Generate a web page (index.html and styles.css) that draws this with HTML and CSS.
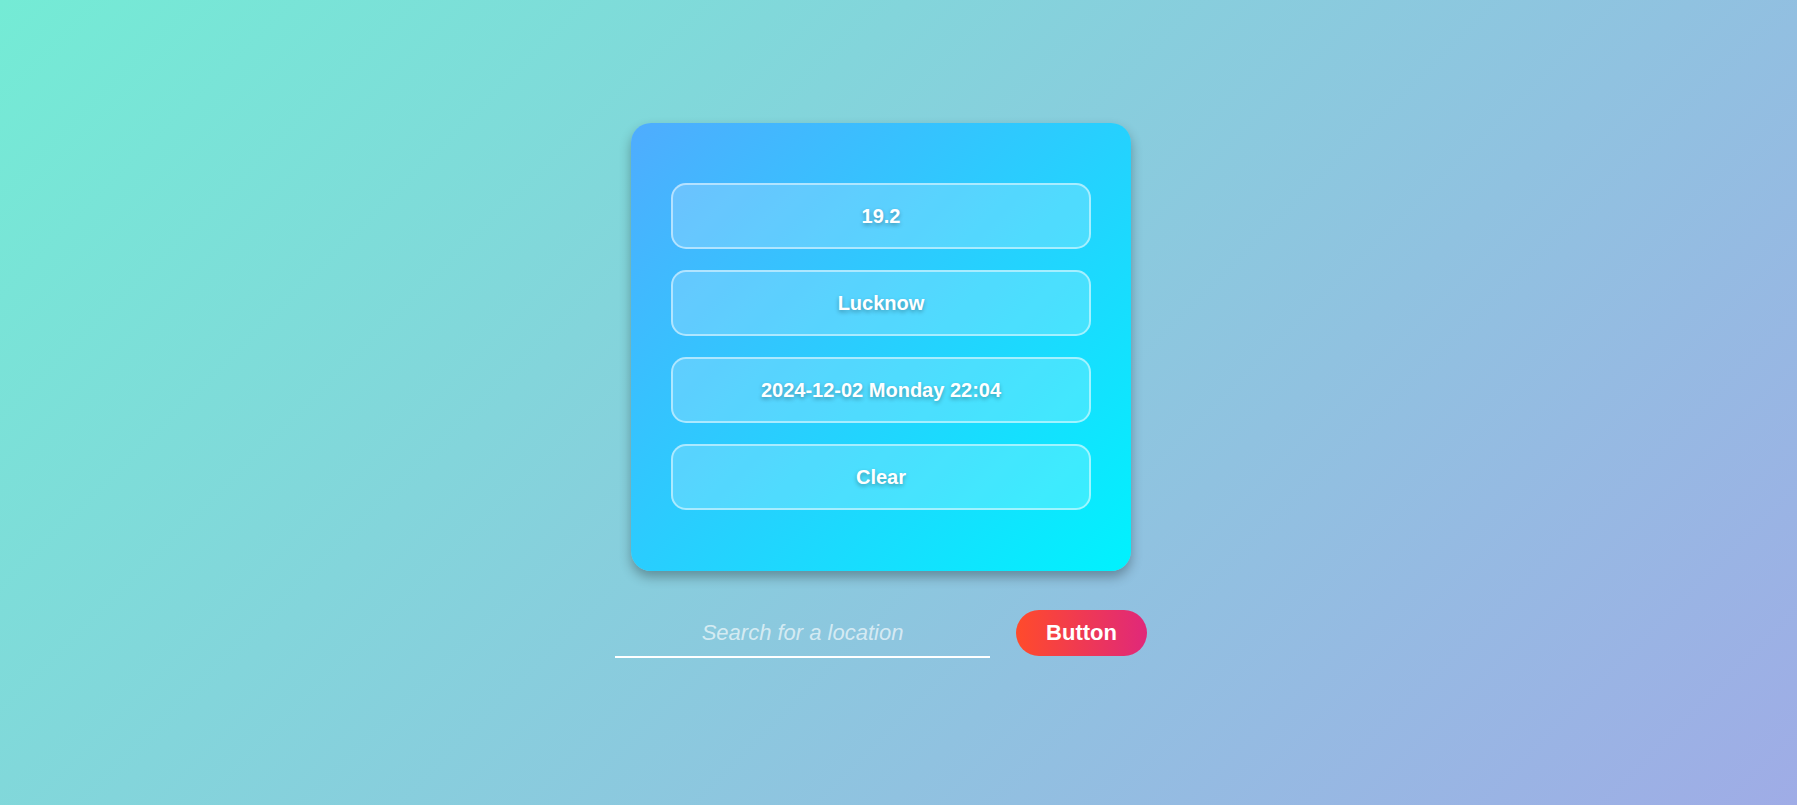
FILE: index.html
```html
<!DOCTYPE html>
<html lang="en">
<head>
<meta charset="utf-8">
<title>Weather</title>
<link rel="stylesheet" href="styles.css">
</head>
<body>
<main class="page">
  <section class="card">
    <div class="item">19.2</div>
    <div class="item">Lucknow</div>
    <div class="item">2024-12-02 Monday 22:04</div>
    <div class="item">Clear</div>
  </section>
  <div class="search">
    <input class="search-input" type="text" placeholder="Search for a location">
    <button class="search-btn">Button</button>
  </div>
</main>
</body>
</html>
```
FILE: styles.css
```css
* { box-sizing: border-box; }
html, body { margin: 0; height: 100%; }
body {
  background: linear-gradient(135deg, #74ebd5 0%, #9face6 100%);
  font-family: "Liberation Sans", Arial, sans-serif;
  overflow: hidden;
}
.page {
  display: flex;
  flex-direction: column;
  align-items: center;
  padding-top: 123px;
  padding-right: 35px;
  gap: 39px;
}
.card {
  width: 500px;
  padding: 60px 40px 61px;
  border-radius: 20px;
  background: linear-gradient(135deg, #4facfe 0%, #00f2fe 100%);
  box-shadow: 0 6px 12px rgba(0, 0, 0, 0.3);
  display: flex;
  flex-direction: column;
  gap: 21px;
}
.item {
  height: 66px;
  display: flex;
  align-items: center;
  justify-content: center;
  background: rgba(255, 255, 255, 0.2);
  border: 2px solid rgba(255, 255, 255, 0.5);
  border-radius: 15px;
  color: #fff;
  font-size: 20px;
  font-weight: bold;
  text-shadow: 0 2px 4px rgba(0, 0, 0, 0.3);
}
.search {
  display: flex;
  align-items: flex-end;
  gap: 26px;
}
.search-input {
  width: 375px;
  height: 48px;
  padding: 0 10px;
  background: transparent;
  border: none;
  border-bottom: 2px solid #fff;
  outline: none;
  color: #fff;
  font-family: "Liberation Sans", Arial, sans-serif;
  font-size: 22px;
  font-style: italic;
  text-align: center;
}
.search-input::placeholder {
  color: rgba(255, 255, 255, 0.65);
}
.search-btn {
  height: 46px;
  margin-bottom: 2px;
  padding: 0 30px;
  border: none;
  border-radius: 23px;
  background: linear-gradient(90deg, #ff4b2b 0%, #e0287a 100%);
  color: #fff;
  font-family: "Liberation Sans", Arial, sans-serif;
  font-size: 22px;
  font-weight: bold;
  cursor: pointer;
}
```
